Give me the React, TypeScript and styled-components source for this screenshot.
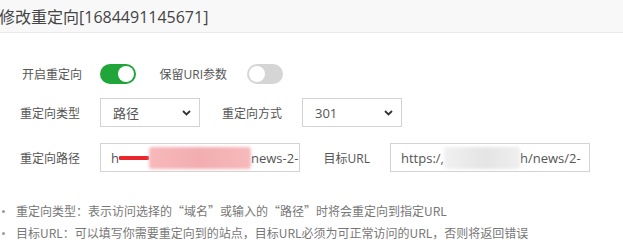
import React from 'react';
import styled, { createGlobalStyle } from 'styled-components';

const GlobalStyle = createGlobalStyle`
  html, body {
    margin: 0;
    padding: 0;
    background: #fff;
  }
  body {
    font-family: "Open Sans", "Noto Sans CJK SC", sans-serif;
    color: #555;
  }
`;

const Dialog = styled.div`
  width: 623px;
  height: 244px;
  overflow: hidden;
  background: #fff;
`;

const Header = styled.div`
  height: 32px;
  border-bottom: 1px solid #e9e9e9;
  background: #f8f8f8;
  display: flex;
  align-items: center;

  h3 {
    margin: 0 0 0 -1px;
    font-size: 16px;
    font-weight: 400;
    color: #444;
  }
`;

const Body = styled.div`
  padding: 26px 0 0 20px;
`;

const Row = styled.div<{ $gap: number }>`
  display: flex;
  align-items: center;
  height: 29px;
  margin-bottom: ${(p) => p.$gap}px;
`;

const Label = styled.label<{ $width: number; $pad?: number }>`
  width: ${(p) => p.$width}px;
  box-sizing: border-box;
  padding-right: ${(p) => p.$pad ?? 20}px;
  text-align: right;
  font-size: 12px;
  color: #555;
  white-space: nowrap;
`;

const Switch = styled.span<{ $on: boolean }>`
  display: inline-flex;
  align-items: center;
  justify-content: ${(p) => (p.$on ? 'flex-end' : 'flex-start')};
  width: 36px;
  height: 20px;
  box-sizing: border-box;
  padding: 2px;
  border-radius: 10px;
  background: ${(p) => (p.$on ? '#20a53a' : '#d5d5d5')};

  &::after {
    content: '';
    width: 16px;
    height: 16px;
    border-radius: 50%;
    background: #fff;
  }
`;

const Select = styled.div`
  width: 100px;
  height: 29px;
  box-sizing: border-box;
  border: 1px solid #d3d3d3;
  display: flex;
  align-items: center;
  justify-content: space-between;
  padding: 0 8px 0 12px;
  font-size: 13px;
  color: #555;

  svg {
    width: 9px;
    height: 6px;
  }
`;

const Input = styled.div`
  width: 200px;
  height: 29px;
  box-sizing: border-box;
  border: 1px solid #d3d3d3;
  display: flex;
  align-items: center;
  padding: 0 2px 0 10px;
  font-size: 13px;
  color: #555;
  white-space: nowrap;
  overflow: hidden;
`;

const Scribble = styled.span`
  display: inline-block;
  flex: none;
  width: 30px;
  height: 4px;
  margin-top: 1px;
  background: #e8262b;
  border-radius: 1px;
`;

const Blur = styled.span<{ $w: number; $color: string }>`
  display: inline-block;
  flex: none;
  width: ${(p) => p.$w}px;
  height: 22px;
  background: ${(p) => p.$color};
  filter: blur(1.5px);
  border-radius: 3px;
`;

const Tips = styled.ul`
  list-style: none;
  margin: 28px 0 0 -20px;
  padding: 0;

  li {
    position: relative;
    padding-left: 16px;
    line-height: 22px;
    font-size: 12px;
    font-family: "Noto Sans CJK SC", sans-serif;
    color: #777;
    white-space: nowrap;

    &::before {
      content: '';
      position: absolute;
      left: 2px;
      top: 10px;
      width: 3px;
      height: 3px;
      border-radius: 50%;
      background: #999;
    }
  }
`;

const Chevron = () => (
  <svg viewBox="0 0 9 6">
    <path d="M1 1l3.5 3.5L8 1" fill="none" stroke="#333" strokeWidth="1.8" />
  </svg>
);

export default function App() {
  return (
    <>
      <GlobalStyle />
      <Dialog>
        <Header>
          <h3>修改重定向[1684491145671]</h3>
        </Header>
        <Body>
          <Row $gap={10}>
            <Label $width={80} $pad={18}>开启重定向</Label>
            <Switch $on />
            <Label $width={111}>保留URI参数</Label>
            <Switch $on={false} />
          </Row>
          <Row $gap={16}>
            <Label $width={80}>重定向类型</Label>
            <Select>
              <span>路径</span>
              <Chevron />
            </Select>
            <Label $width={102}>重定向方式</Label>
            <Select>
              <span>301</span>
              <Chevron />
            </Select>
          </Row>
          <Row $gap={0}>
            <Label $width={80}>重定向路径</Label>
            <Input>
              <span>h</span>
              <Scribble />
              <Blur $w={102} $color="linear-gradient(90deg, #f7b9bb, #f2adb0 50%, #f6babc)" />
              <span>news-2-</span>
            </Input>
            <Label $width={90}>目标URL</Label>
            <Input>
              <span>https:/,</span>
              <Blur $w={76} $color="linear-gradient(90deg, #f1f1f1, #e4e4e4 55%, #efefef)" />
              <span>h/news/2-</span>
            </Input>
          </Row>
          <Tips>
            <li>重定向类型：表示访问选择的“域名”或输入的“路径”时将会重定向到指定URL</li>
            <li>目标URL：可以填写你需要重定向到的站点，目标URL必须为可正常访问的URL，否则将返回错误</li>
          </Tips>
        </Body>
      </Dialog>
    </>
  );
}
